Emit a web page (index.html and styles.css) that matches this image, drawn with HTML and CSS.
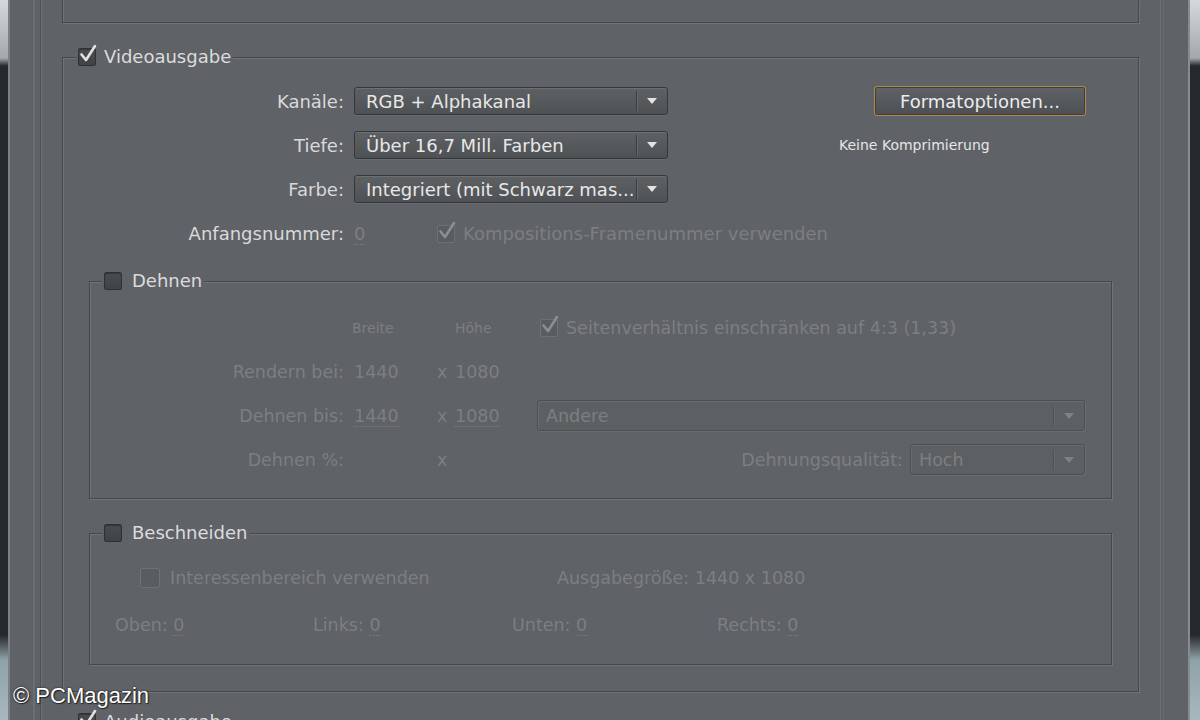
FILE: index.html
```html
<!DOCTYPE html>
<html lang="de">
<head>
    <meta charset="UTF-8">
    <title>Ausgabemodul-Einstellungen</title>
    <link rel="stylesheet" href="styles.css">
</head>
<body>

<div class="screen">
    <div class="edge edge-left"></div>

    <div class="dialog">
        <div class="frame">
            <div class="frame-in">

                <!-- oberer Bereich (abgeschnitten) -->
                <div class="top-group"></div>

                <!-- Videoausgabe -->
                <fieldset class="group video">
                    <legend>
                        <span class="legend-in">
                            <span class="check on"><svg viewBox="0 0 20 20"><path d="M3.5 9.5 L8 15 L17 1"/></svg></span>
                            Videoausgabe
                        </span>
                    </legend>

                    <div class="video-top">
                        <div class="lbl">Kanäle:</div>
                        <div class="select"><span class="select-text">RGB + Alphakanal</span><span class="select-arrow"></span></div>

                        <div class="format">
                            <button class="format-btn">Formatoptionen...</button>
                            <div class="format-note">Keine Komprimierung</div>
                        </div>

                        <div class="lbl">Tiefe:</div>
                        <div class="select"><span class="select-text">Über 16,7 Mill. Farben</span><span class="select-arrow"></span></div>

                        <div class="lbl">Farbe:</div>
                        <div class="select"><span class="select-text">Integriert (mit Schwarz mas...</span><span class="select-arrow"></span></div>
                    </div>

                    <div class="start-row">
                        <div class="lbl">Anfangsnummer:</div>
                        <div class="value"><span class="hot off">0</span></div>
                        <div class="check-line off">
                            <span class="check on dim"><svg viewBox="0 0 20 20"><path d="M3.5 9.5 L8 15 L17 1"/></svg></span>
                            Kompositions-Framenummer verwenden
                        </div>
                    </div>

                    <!-- Dehnen -->
                    <fieldset class="group sub stretch">
                        <legend>
                            <span class="legend-in">
                                <span class="check"></span>
                                Dehnen
                            </span>
                        </legend>

                        <div class="stretch-grid off">
                            <div></div>
                            <div class="head col-w">Breite</div>
                            <div></div>
                            <div class="head">Höhe</div>
                            <div class="check-line">
                                <span class="check on dim"><svg viewBox="0 0 20 20"><path d="M3.5 9.5 L8 15 L17 1"/></svg></span>
                                Seitenverhältnis einschränken auf 4:3 (1,33)
                            </div>

                            <div class="lbl">Rendern bei:</div>
                            <div class="col-w">1440</div>
                            <div>x</div>
                            <div>1080</div>
                            <div></div>

                            <div class="lbl">Dehnen bis:</div>
                            <div class="col-w"><span class="hot">1440</span></div>
                            <div>x</div>
                            <div><span class="hot">1080</span></div>
                            <div class="select dim"><span class="select-text">Andere</span><span class="select-arrow"></span></div>

                            <div class="lbl">Dehnen %:</div>
                            <div></div>
                            <div>x</div>
                            <div></div>
                            <div class="quality">
                                <span>Dehnungsqualität:</span>
                                <div class="select dim quality-select"><span class="select-text">Hoch</span><span class="select-arrow"></span></div>
                            </div>
                        </div>
                    </fieldset>

                    <!-- Beschneiden -->
                    <fieldset class="group sub crop">
                        <legend>
                            <span class="legend-in">
                                <span class="check"></span>
                                Beschneiden
                            </span>
                        </legend>

                        <div class="crop-top off">
                            <div class="check-line roi">
                                <span class="check dim big"></span>
                                Interessenbereich verwenden
                            </div>
                            <div>Ausgabegröße: 1440 x 1080</div>
                        </div>

                        <div class="crop-sides off">
                            <div>Oben: <span class="hot">0</span></div>
                            <div>Links: <span class="hot">0</span></div>
                            <div>Unten: <span class="hot">0</span></div>
                            <div>Rechts: <span class="hot">0</span></div>
                        </div>
                    </fieldset>
                </fieldset>

                <!-- Audioausgabe (abgeschnitten) -->
                <fieldset class="group audio">
                    <legend>
                        <span class="legend-in">
                            <span class="check on"><svg viewBox="0 0 20 20"><path d="M3.5 9.5 L8 15 L17 1"/></svg></span>
                            Audioausgabe
                        </span>
                    </legend>
                    <div class="audio-body"></div>
                </fieldset>

            </div>
        </div>
    </div>

    <div class="edge edge-right"></div>

    <div class="watermark">© PCMagazin</div>
</div>

</body>
</html>
```

FILE: styles.css
```css
* {
    box-sizing: border-box;
}
body {
    margin: 0;
    background-color: #5f6266;
    font-family: "DejaVu Sans", sans-serif;
    font-size: 18px;
    color: #d9d9d9;
    overflow: hidden;
}
.screen {
    position: relative;
    display: flex;
    width: 1200px;
    height: 720px;
    overflow: hidden;
}

/* Fensterkanten links / rechts */
.edge {
    flex: none;
    height: 100%;
}
.edge-left {
    width: 10px;
    background: linear-gradient(to bottom, #d6d9db 0, #a3a8ab 58px, #26292c 66px, #26292c 635px, #8fa2a9 660px, #a8b8be 720px);
    box-shadow: inset -2px 0 0 #7c8083;
}
.edge-right {
    width: 12px;
    background: linear-gradient(to bottom, #d6d9db 0, #a3a8ab 58px, #26292c 66px, #26292c 635px, #8fa2a9 660px, #a8b8be 720px);
    border-left: 2px solid #888c8f;
}

/* Rahmenlinien */
.dialog {
    flex: 1;
    padding: 0 24px 0 23px;
}
.frame {
    height: 100%;
    border-left: 2px solid #6b6e71;
    border-right: 1px solid #6b6e71;
    padding: 0 2px 0 5px;
}
.frame-in {
    height: 100%;
    border-left: 1px solid #4e5154;
    border-right: 1px solid #6e7174;
    box-shadow: inset 1px 0 0 #6e7174;
    padding: 0 21px;
}

.top-group {
    height: 23px;
    border: 1px solid #45484b;
    border-top: none;
    box-shadow: 1px 1px 0 #717477, inset 1px 0 0 #717477;
}

/* Gruppenrahmen */
.group {
    margin: 0;
    min-width: 0;
    border: 1px solid #45484b;
    box-shadow: 1px 1px 0 #717477, inset 1px 1px 0 #717477;
}
.group legend {
    padding: 0 2px;
    background-color: #5f6266;
}
.legend-in {
    display: flex;
    align-items: center;
    gap: 8px;
    height: 18px;
    line-height: 18px;
    color: #dcdcdc;
}
.group.sub .legend-in {
    gap: 10px;
}

.video {
    margin-top: 25px;
    padding: 21px 26px 26px 13px;
}
.sub {
    margin-left: 13px;
}
.stretch {
    margin-top: 27px;
    padding: 22px 26px 23px 12px;
}
.crop {
    margin-top: 25px;
    padding: 25px 26px 28px 12px;
}
.audio {
    margin-top: 21px;
    padding: 20px 26px 20px 13px;
}
.audio-body {
    height: 60px;
}

/* Checkboxen */
.check {
    position: relative;
    flex: none;
    display: inline-block;
    width: 18px;
    height: 18px;
    border: 1px solid #2f3235;
    border-radius: 2px;
    background: linear-gradient(#4a4d50, #404346);
    box-shadow: inset 0 1px 1px rgba(0, 0, 0, 0.3);
}
.check svg {
    position: absolute;
    left: -1px;
    top: -4px;
    width: 20px;
    height: 20px;
    overflow: visible;
}
.check svg path {
    fill: none;
    stroke: #e2e2e2;
    stroke-width: 2.6;
    stroke-linecap: round;
    stroke-linejoin: round;
}
.check.dim {
    border-color: #6f7275;
    background: #5a5d60;
    box-shadow: none;
}
.check.dim svg path {
    stroke: #8c8f92;
}
.check.big {
    width: 20px;
    height: 20px;
}

/* Beschriftungen */
.lbl {
    text-align: right;
    white-space: nowrap;
}
.off {
    color: #7c7f82;
    font-size: 17.5px;
}
.start-row .off,
.start-row .check-line {
    font-size: 18px;
}
.hot {
    border-bottom: 1px dotted currentColor;
    line-height: 1.05;
}
.check-line {
    display: flex;
    align-items: center;
    gap: 8px;
    white-space: nowrap;
    color: #7c7f82;
}

/* Auswahlfelder */
.select {
    display: flex;
    align-items: center;
    height: 28px;
    border: 1px solid #35383b;
    border-radius: 3px;
    background: linear-gradient(#5e6164, #4f5255);
    box-shadow: inset 0 1px 0 rgba(255, 255, 255, 0.1), 0 1px 0 rgba(255, 255, 255, 0.06);
    color: #e8e8e8;
}
.select-text {
    flex: 1;
    padding-left: 11px;
    white-space: nowrap;
    overflow: hidden;
}
.select-arrow {
    display: flex;
    align-items: center;
    justify-content: center;
    width: 31px;
    height: 20px;
    border-left: 1px solid #3a3d40;
    box-shadow: inset 1px 0 0 #686b6e;
}
.select-arrow::before {
    content: "";
    border-left: 5px solid transparent;
    border-right: 5px solid transparent;
    border-top: 6px solid #e4e4e4;
}
.select.dim {
    height: 31px;
    border-color: #4d5053;
    background: #5d6063;
    box-shadow: inset 1px 1px 0 #6a6d70, 1px 1px 0 #6a6d70;
    color: #7c7f82;
}
.select.dim .select-text {
    padding-left: 8px;
}
.select.dim .select-arrow {
    border-left-color: #505356;
}
.select.dim .select-arrow::before {
    border-top-color: #7f8285;
}

/* oberer Teil Videoausgabe */
.video-top {
    display: grid;
    grid-template-columns: 268px 314px 1fr;
    grid-auto-rows: 28px;
    column-gap: 10px;
    row-gap: 16px;
    align-items: center;
}
.format {
    grid-column: 3;
    grid-row: 1 / span 3;
    align-self: start;
    margin-top: -1px;
    padding-left: 161px;
}
.format-btn {
    display: block;
    width: 212px;
    height: 30px;
    margin-left: 35px;
    padding: 0;
    border: 1px solid #b68943;
    border-radius: 3px;
    background: linear-gradient(#5f6267, #4c4f53);
    box-shadow: inset 0 0 0 1px #3c3f43;
    color: #ececec;
    font-family: "DejaVu Sans", sans-serif;
    font-size: 18px;
}
.format-note {
    margin-top: 21px;
    font-size: 14px;
    line-height: 16px;
    color: #e6e6e6;
    white-space: nowrap;
}

.start-row {
    display: grid;
    grid-template-columns: 268px 73px auto;
    column-gap: 10px;
    height: 22px;
    line-height: 22px;
    margin-top: 20px;
    align-items: center;
}
.start-row .hot {
    color: #7c7f82;
}

/* Dehnen */
.stretch-grid {
    display: grid;
    grid-template-columns: 242px 93px 18px 82px 1fr;
    grid-auto-rows: 31px;
    row-gap: 13px;
    align-items: center;
    white-space: nowrap;
}
.stretch-grid .col-w {
    padding-left: 10px;
}
.stretch-grid .head {
    font-size: 14px;
}
.stretch-grid .head.col-w {
    padding-left: 8px;
}
.stretch-grid .check-line {
    padding-left: 3px;
}
.quality {
    display: flex;
    align-items: center;
    justify-content: flex-end;
    gap: 7px;
}
.quality-select {
    width: 175px;
}

/* Beschneiden */
.crop-top {
    display: grid;
    grid-template-columns: 455px 1fr;
    height: 22px;
    align-items: center;
    white-space: nowrap;
}
.roi {
    padding-left: 38px;
    gap: 10px;
}
.crop-sides {
    display: grid;
    grid-template-columns: 198px 199px 205px auto;
    height: 22px;
    margin-top: 25px;
    padding-left: 13px;
    align-items: center;
    white-space: nowrap;
}

/* Wasserzeichen */
.watermark {
    position: absolute;
    left: 13px;
    top: 683px;
    font-family: "Liberation Sans", Arial, sans-serif;
    font-size: 22px;
    color: #ffffff;
    text-shadow: 0 0 2px rgba(0, 0, 0, 0.8), 1px 1px 1px rgba(0, 0, 0, 0.6);
}
```
